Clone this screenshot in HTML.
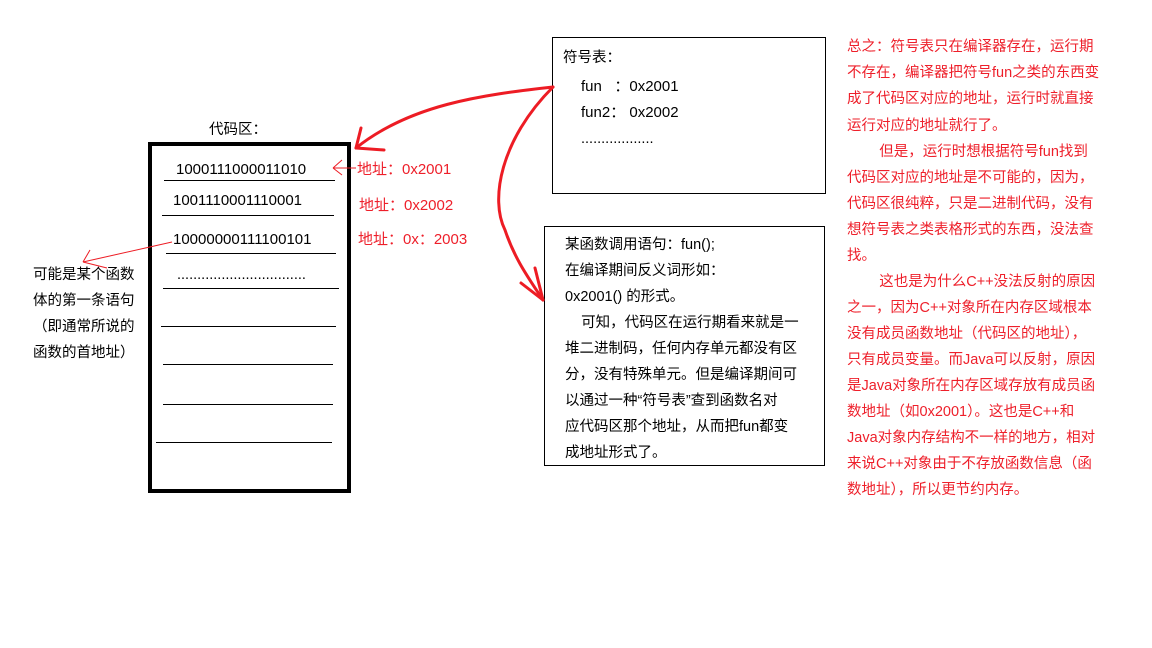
<!DOCTYPE html>
<html><head><meta charset="utf-8"><style>
body{margin:0;width:1152px;height:648px;background:#fff;position:relative;overflow:hidden;font-family:"Liberation Sans","Noto Sans CJK SC",sans-serif;font-size:14.5px;color:#000}
.t{position:absolute;white-space:nowrap;line-height:18px}
.r{color:#ee1f2a}
.hl{position:absolute;height:1px;background:#000}
</style></head><body>
<div style="position:absolute;left:148px;top:142px;width:195px;height:343px;border:4px solid #000"></div>
<div class="t" style="left:209px;top:121px">代码区：</div>
<div class="t" style="left:176px;top:161px;font-size:15px">1000111000011010</div>
<div class="t" style="left:173px;top:192px;font-size:15px">1001110001110001</div>
<div class="t" style="left:173px;top:231px;font-size:15px">10000000111100101</div>
<div class="t" style="left:177px;top:266px">................................</div>
<div class="hl" style="left:164px;top:180px;width:171px"></div>
<div class="hl" style="left:162px;top:215px;width:172px"></div>
<div class="hl" style="left:166px;top:253px;width:170px"></div>
<div class="hl" style="left:163px;top:288px;width:176px"></div>
<div class="hl" style="left:161px;top:326px;width:175px"></div>
<div class="hl" style="left:163px;top:364px;width:170px"></div>
<div class="hl" style="left:163px;top:404px;width:170px"></div>
<div class="hl" style="left:156px;top:442px;width:176px"></div>
<div class="t r" style="left:357px;top:161px;font-size:15px">地址：0x2001</div>
<div class="t r" style="left:359px;top:197px;font-size:15px">地址：0x2002</div>
<div class="t r" style="left:358px;top:231px;font-size:15px">地址：0x：2003</div>
<div class="t" style="left:33px;top:266px">可能是某个函数</div>
<div class="t" style="left:33px;top:292px">体的第一条语句</div>
<div class="t" style="left:33px;top:318px">（即通常所说的</div>
<div class="t" style="left:33px;top:344px">函数的首地址）</div>
<div style="position:absolute;left:552px;top:37px;width:272px;height:155px;border:1px solid #000"></div>
<div class="t" style="left:563px;top:49px">符号表：</div>
<div class="t" style="left:581px;top:78px;font-size:15px">fun&nbsp;&nbsp;&nbsp;：0x2001</div>
<div class="t" style="left:581px;top:104px;font-size:15px">fun2：&nbsp;0x2002</div>
<div class="t" style="left:581px;top:130px">..................</div>
<div style="position:absolute;left:544px;top:226px;width:279px;height:238px;border:1px solid #000"></div>
<div class="t" style="left:565px;top:236px">某函数调用语句：fun();</div>
<div class="t" style="left:565px;top:262px">在编译期间反义词形如：</div>
<div class="t" style="left:565px;top:288px">0x2001() 的形式。</div>
<div class="t" style="left:565px;top:314px">&nbsp;&nbsp;&nbsp;&nbsp;可知，代码区在运行期看来就是一</div>
<div class="t" style="left:565px;top:340px">堆二进制码，任何内存单元都没有区</div>
<div class="t" style="left:565px;top:366px">分，没有特殊单元。但是编译期间可</div>
<div class="t" style="left:565px;top:392px">以通过一种“符号表”查到函数名对</div>
<div class="t" style="left:565px;top:418px">应代码区那个地址，从而把fun都变</div>
<div class="t" style="left:565px;top:444px">成地址形式了。</div>
<div class="r">
<div class="t" style="left:847px;top:38px">总之：符号表只在编译器存在，运行期</div>
<div class="t" style="left:847px;top:64px">不存在，编译器把符号fun之类的东西变</div>
<div class="t" style="left:847px;top:90px">成了代码区对应的地址，运行时就直接</div>
<div class="t" style="left:847px;top:117px">运行对应的地址就行了。</div>
<div class="t" style="left:847px;top:143px">&nbsp;&nbsp;&nbsp;&nbsp;&nbsp;&nbsp;&nbsp;&nbsp;但是，运行时想根据符号fun找到</div>
<div class="t" style="left:847px;top:169px">代码区对应的地址是不可能的，因为，</div>
<div class="t" style="left:847px;top:195px">代码区很纯粹，只是二进制代码，没有</div>
<div class="t" style="left:847px;top:221px">想符号表之类表格形式的东西，没法查</div>
<div class="t" style="left:847px;top:247px">找。</div>
<div class="t" style="left:847px;top:273px">&nbsp;&nbsp;&nbsp;&nbsp;&nbsp;&nbsp;&nbsp;&nbsp;这也是为什么C++没法反射的原因</div>
<div class="t" style="left:847px;top:299px">之一，因为C++对象所在内存区域根本</div>
<div class="t" style="left:847px;top:325px">没有成员函数地址（代码区的地址），</div>
<div class="t" style="left:847px;top:351px">只有成员变量。而Java可以反射，原因</div>
<div class="t" style="left:847px;top:377px">是Java对象所在内存区域存放有成员函</div>
<div class="t" style="left:847px;top:403px">数地址（如0x2001）。这也是C++和</div>
<div class="t" style="left:847px;top:429px">Java对象内存结构不一样的地方，相对</div>
<div class="t" style="left:847px;top:455px">来说C++对象由于不存放函数信息（函</div>
<div class="t" style="left:847px;top:481px">数地址），所以更节约内存。</div>
</div>
<svg width="1152" height="648" style="position:absolute;left:0;top:0" fill="none">
<g stroke="#ed1c24" stroke-width="3" stroke-linecap="round">
<path d="M553 87 C480 95 410 105 356 148"/>
<path d="M356 148 L361 128 M356 148 L384 150"/>
<path d="M553 87 C500 140 490 200 505 230 C515 260 530 280 543 300"/>
<path d="M543 300 L535 268 M543 300 L521 283"/>
</g>
<g stroke="#ed1c24" stroke-width="1">
<path d="M356 168 L333 168 M333 168 L342 160 M333 168 L342 175"/>
<path d="M172 242 L83 262 M83 262 L90 250 M83 262 L107 268"/>
</g>
</svg>
</body></html>
